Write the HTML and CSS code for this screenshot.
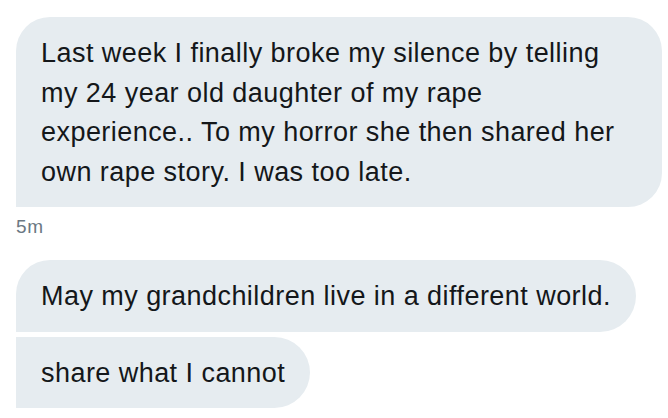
FILE: index.html
```html
<!DOCTYPE html>
<html>
<head>
<meta charset="utf-8">
<link rel="stylesheet" href="styles.css">
</head>
<body>
<div class="thread">
  <div class="group">
    <div class="bubble first">Last week I finally broke my silence by telling my 24 year old daughter of my rape experience.. To my horror she then shared her own rape story. I was too late.</div>
    <div class="time">5m</div>
  </div>
  <div class="group second">
    <div class="bubble first middle">May my grandchildren live in a different world.</div>
    <div class="bubble last">share what I cannot</div>
  </div>
</div>
</body>
</html>
```
FILE: styles.css
```css
html, body {
  margin: 0;
  padding: 0;
  background: #ffffff;
}
body {
  font-family: "Liberation Sans", Arial, sans-serif;
  color: #14171a;
  overflow: hidden;
}
.thread {
  padding: 17px 0 0 16px;
  display: flex;
  flex-direction: column;
}
.group {
  display: flex;
  flex-direction: column;
  align-items: flex-start;
  gap: 5px;
}
.group.second {
  margin-top: 22px;
}
.bubble {
  background: #e6ecf0;
  font-size: 27px;
  letter-spacing: 0.45px;
  line-height: 39.5px;
  padding: 17px 25px 15px 25px;
  border-radius: 34px 34px 34px 0;
  box-sizing: border-box;
}
.bubble.first:not(.middle) {
  width: 646px;
}
.bubble.middle {
  border-radius: 34px 36px 36px 0;
}
.bubble.last {
  border-radius: 0 36px 36px 0;
}
.time {
  font-size: 19px;
  letter-spacing: 0.6px;
  line-height: 22px;
  color: #6b7883;
  margin-top: 4px;
}
```
